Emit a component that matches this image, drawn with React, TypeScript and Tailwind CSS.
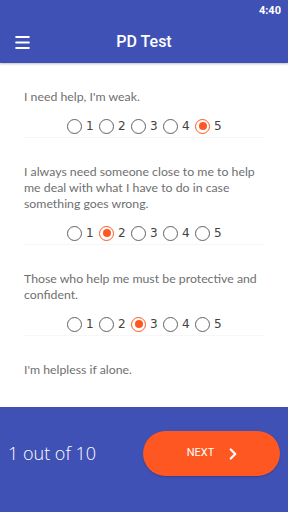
import { Menu, ChevronRight } from 'lucide-react';

const questions = [
  { text: "I need help, I'm weak.", value: 5 },
  {
    text: 'I always need someone close to me to help me deal with what I have to do in case something goes wrong.',
    value: 2,
  },
  { text: 'Those who help me must be protective and confident.', value: 3 },
  { text: "I'm helpless if alone.", value: 0 },
];

function RadioRow({ value }: { value: number }) {
  return (
    <div className="flex items-center justify-center h-4 mt-[13px] pl-[6px]">
      {[1, 2, 3, 4, 5].map((n) => {
        const on = n === value;
        return (
          <div key={n} className="flex items-center w-[32px]">
            <div
              className={
                on
                  ? 'w-[15px] h-[15px] rounded-full border-[1.5px] border-[#ff5722] flex items-center justify-center'
                  : 'w-[15px] h-[15px] rounded-full border-[1.5px] border-[#616161]'
              }
            >
              {on && <div className="w-[8px] h-[8px] rounded-full bg-[#ff5722]" />}
            </div>
            <span className="ml-[4px] text-[12px] text-[#424242] font-['DejaVu_Sans',sans-serif]">{n}</span>
          </div>
        );
      })}
    </div>
  );
}

export default function App() {
  return (
    <div className="w-[288px] h-[512px] flex flex-col bg-white overflow-hidden font-['Lato',sans-serif]">
      {/* Status + App bar */}
      <div className="bg-[#3f51b5] h-[63px] shadow-[0_1px_2px_rgba(0,0,0,0.25)] relative z-10">
        <div className="h-[22px] flex items-center justify-end pr-[7px]">
          <span className="text-white text-[11px] font-bold font-['Roboto',sans-serif]">4:40</span>
        </div>
        <div className="h-[41px] flex items-center px-[13px]">
          <Menu size={19} className="text-white" strokeWidth={2.5} />
          <div className="flex-1 text-center text-white text-[16px] font-medium font-['Roboto',sans-serif] pr-[19px] -mt-[1px]">
            PD Test
          </div>
        </div>
      </div>

      {/* Questions */}
      <div className="flex-1 mx-6">
        {questions.map((q, i) => (
          <div key={i} className={i < 3 ? 'pt-[26px] pb-[3px] border-b border-[#f7f7f7]' : 'pt-[26px]'}>
            <p className="text-[12.3px] leading-[16px] text-[#6f6f6f]">{q.text}</p>
            {i < 3 && <RadioRow value={q.value} />}
          </div>
        ))}
      </div>

      {/* Footer */}
      <div className="bg-[#3f51b5] h-[105px] flex items-center justify-between pl-[8px] pr-[8px] pb-[12px]">
        <span className="text-white text-[18px] font-['Open_Sans',sans-serif] font-light">1 out of 10</span>
        <button className="w-[137px] h-[45px] rounded-full bg-[#ff5722] flex items-center justify-center gap-[10px] shadow-[0_1px_2px_rgba(0,0,0,0.2)]">
          <span className="text-white text-[11px] font-['Roboto',sans-serif] ml-[6px]">NEXT</span>
          <ChevronRight size={18} strokeWidth={3} className="text-white" />
        </button>
      </div>
    </div>
  );
}
